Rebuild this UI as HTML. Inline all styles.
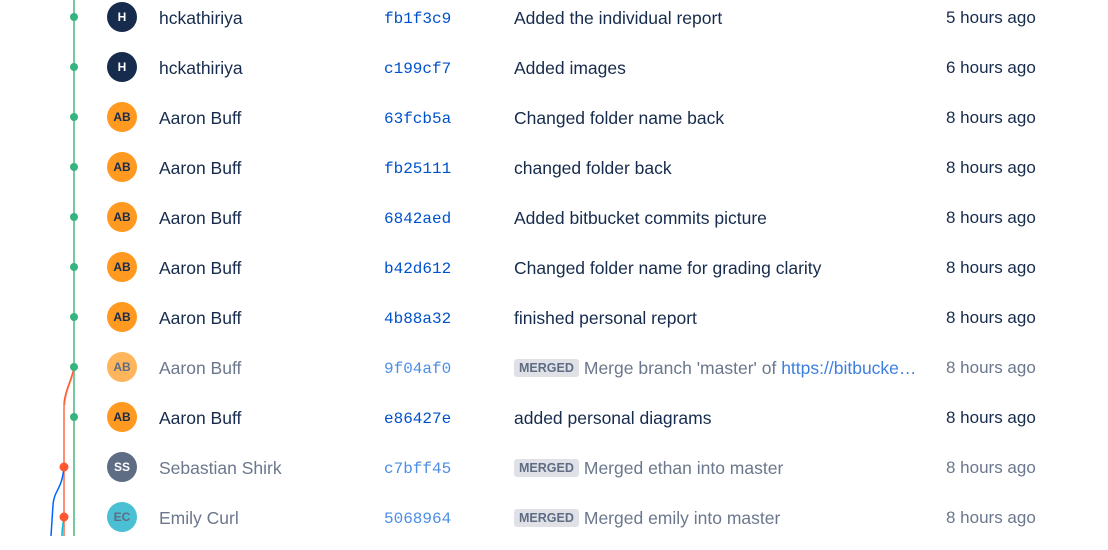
<!DOCTYPE html>
<html><head><meta charset="utf-8"><style>
body{margin:0;width:1108px;height:536px;overflow:hidden;background:#fff;font-family:"Liberation Sans",sans-serif;position:relative}
.r{position:absolute;left:0;width:1108px;height:50px}
.av{position:absolute;left:107px;top:2px;width:30px;height:30px;border-radius:50%;color:#fff;font-size:12px;font-weight:bold;text-align:center;line-height:30px}
.n,.h,.m,.t{position:absolute;top:8px;font-size:17.5px;color:#172b4d;white-space:nowrap}
.t{font-size:17px}
.n{left:159px}.h{left:384px;font-family:"Liberation Mono",monospace;font-size:16px;color:#0052cc;top:10px}
.m{left:514px}.t{left:946px}
.f .n,.f .m,.f .t{color:#6b778c}.f .h{color:#4c8ee6}
.b{display:inline-block;background:#dfe1e6;color:#5e6c84;font-size:12.5px;font-weight:bold;padding:2px 5px;border-radius:3px;vertical-align:2px;margin-right:5px}
.lk{color:#3d7fe0}
</style></head><body>
<svg width="1108" height="536" style="position:absolute;left:0;top:0">
<line x1="74" y1="0" x2="74" y2="536" stroke="#79c9a0" stroke-width="2"/>
<path d="M74 368 C72 380,64 392,64 410 L64 536" stroke="#ff8f73" stroke-width="2" fill="none"/>
<path d="M74 368 C72 380,64 392,64 405" stroke="#ff5630" stroke-width="1.2" fill="none"/>
<path d="M64 467 C62 490,54 490,53 505 L51 536" stroke="#0065ff" stroke-width="1.5" fill="none"/>
<path d="M64 517 C63 525,62 528,62 536" stroke="#00b8d9" stroke-width="1.5" fill="none"/>
<g fill="#36b37e">
<circle cx="74" cy="17" r="4"/><circle cx="74" cy="67" r="4"/><circle cx="74" cy="117" r="4"/><circle cx="74" cy="167" r="4"/><circle cx="74" cy="217" r="4"/><circle cx="74" cy="267" r="4"/><circle cx="74" cy="317" r="4"/><circle cx="74" cy="367" r="4"/><circle cx="74" cy="417" r="4"/></g>
<circle cx="64" cy="467" r="4.5" fill="#ff5630"/><circle cx="64" cy="517" r="4.5" fill="#ff5630"/>
</svg>
<div class="r" style="top:0"><div class="av" style="background:#172b4d">H</div><div class="n">hckathiriya</div><div class="h">fb1f3c9</div><div class="m">Added the individual report</div><div class="t">5 hours ago</div></div>
<div class="r" style="top:50px"><div class="av" style="background:#172b4d">H</div><div class="n">hckathiriya</div><div class="h">c199cf7</div><div class="m">Added images</div><div class="t">6 hours ago</div></div>
<div class="r" style="top:100px"><div class="av" style="background:#ff991f;color:#172b4d">AB</div><div class="n">Aaron Buff</div><div class="h">63fcb5a</div><div class="m">Changed folder name back</div><div class="t">8 hours ago</div></div>
<div class="r" style="top:150px"><div class="av" style="background:#ff991f;color:#172b4d">AB</div><div class="n">Aaron Buff</div><div class="h">fb25111</div><div class="m">changed folder back</div><div class="t">8 hours ago</div></div>
<div class="r" style="top:200px"><div class="av" style="background:#ff991f;color:#172b4d">AB</div><div class="n">Aaron Buff</div><div class="h">6842aed</div><div class="m">Added bitbucket commits picture</div><div class="t">8 hours ago</div></div>
<div class="r" style="top:250px"><div class="av" style="background:#ff991f;color:#172b4d">AB</div><div class="n">Aaron Buff</div><div class="h">b42d612</div><div class="m">Changed folder name for grading clarity</div><div class="t">8 hours ago</div></div>
<div class="r" style="top:300px"><div class="av" style="background:#ff991f;color:#172b4d">AB</div><div class="n">Aaron Buff</div><div class="h">4b88a32</div><div class="m">finished personal report</div><div class="t">8 hours ago</div></div>
<div class="r f" style="top:350px"><div class="av" style="background:#ffb55c;color:#5e6c84">AB</div><div class="n">Aaron Buff</div><div class="h">9f04af0</div><div class="m"><span class="b">MERGED</span>Merge branch 'master' of <span class="lk">https://bitbucke…</span></div><div class="t">8 hours ago</div></div>
<div class="r" style="top:400px"><div class="av" style="background:#ff991f;color:#172b4d">AB</div><div class="n">Aaron Buff</div><div class="h">e86427e</div><div class="m">added personal diagrams</div><div class="t">8 hours ago</div></div>
<div class="r f" style="top:450px"><div class="av" style="background:#5e6c84">SS</div><div class="n">Sebastian Shirk</div><div class="h">c7bff45</div><div class="m"><span class="b">MERGED</span>Merged ethan into master</div><div class="t">8 hours ago</div></div>
<div class="r f" style="top:500px"><div class="av" style="background:#4bbfd3;color:#5e6c84">EC</div><div class="n">Emily Curl</div><div class="h">5068964</div><div class="m"><span class="b">MERGED</span>Merged emily into master</div><div class="t">8 hours ago</div></div>
</body></html>
